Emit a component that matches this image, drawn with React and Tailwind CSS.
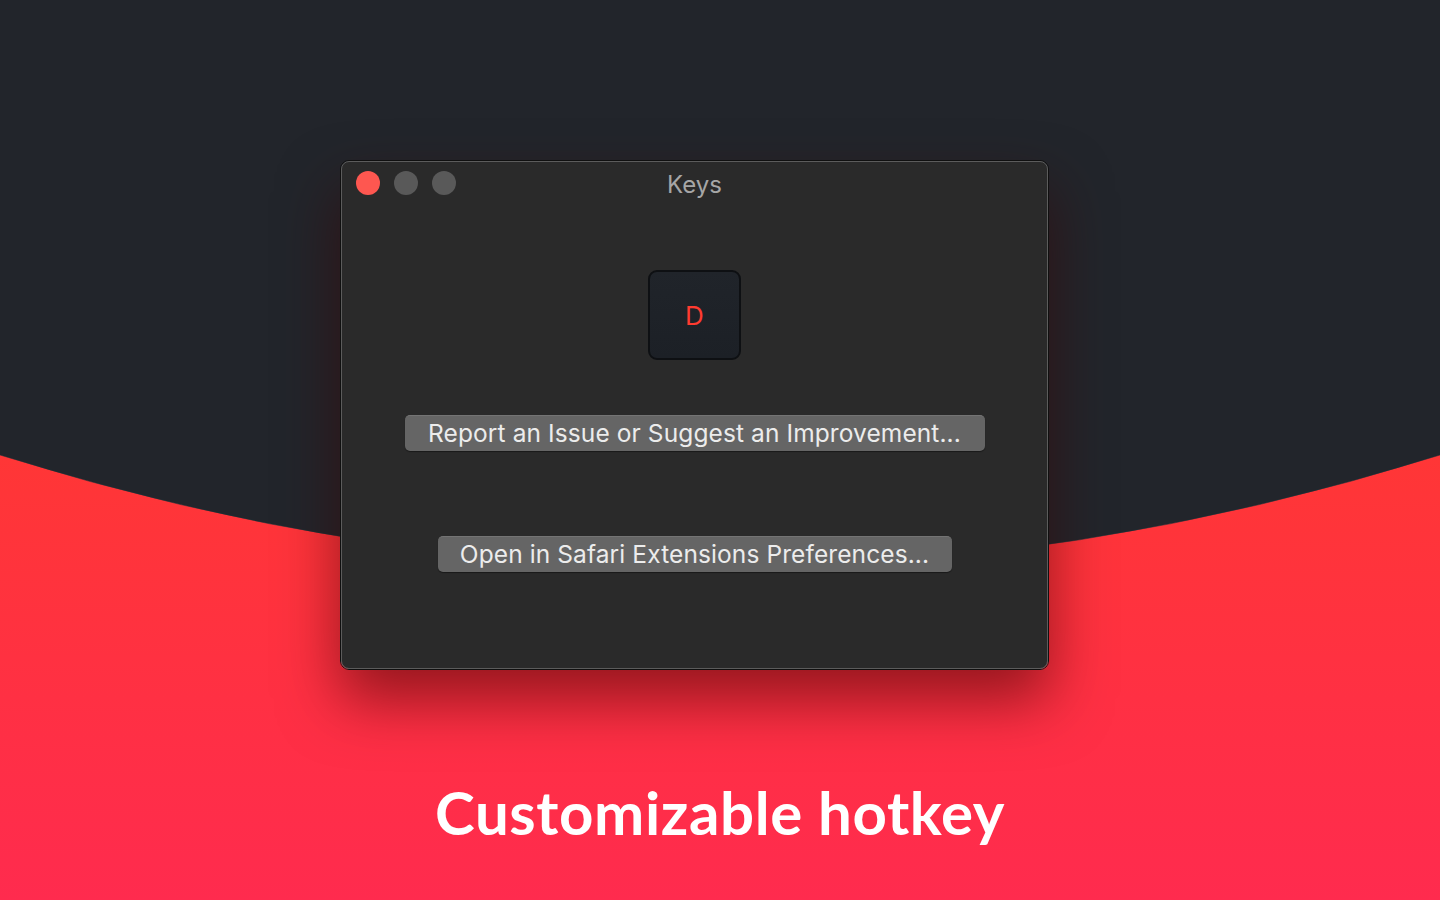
import React from 'react';

// Curved red backdrop behind the window
function Backdrop() {
  return (
    <svg className="absolute inset-0" width="1440" height="900" viewBox="0 0 1440 900">
      <defs>
        <linearGradient id="red" x1="0" y1="0" x2="0" y2="1">
          <stop offset="0" stopColor="#ff3636" />
          <stop offset="1" stopColor="#ff2b4e" />
        </linearGradient>
      </defs>
      <rect width="1440" height="900" fill="#22252b" />
      <path d="M0 455 Q720 681 1440 455 L1440 900 L0 900 Z" fill="url(#red)" />
      <path d="M0 455 Q720 681 1440 455" fill="none" stroke="#16343a" strokeOpacity="0.5" strokeWidth="1" />
    </svg>
  );
}

function MacButton({ children, width }) {
  return (
    <button
      className={`h-[36px] ${width} rounded-[5px] bg-[#656565] border-t border-[#747474] text-[#ececec] text-[24.5px] leading-none tracking-[0.1px] shadow-[0_1px_1px_rgba(0,0,0,0.4)]`}
    >
      {children}
    </button>
  );
}

export default function App() {
  return (
    <div
      className="relative w-[1440px] h-[900px] overflow-hidden"
      style={{ fontFamily: 'Inter, "Open Sans", sans-serif' }}
    >
      <Backdrop />
      <div className="relative flex flex-col items-start">
        {/* Window */}
        <div className="mt-[160px] ml-[340px] w-[709px] h-[510px] rounded-[9px] border border-[#101010] shadow-[0_30px_60px_rgba(60,0,0,0.55)]">
          <div className="w-full h-full rounded-[8px] border border-[#5c5c5c] bg-[#2a2a2a] flex flex-col">
            {/* Title bar */}
            <div className="relative h-[42px] flex items-center pl-[14px] gap-[14px]">
              <span className="w-[24px] h-[24px] rounded-full bg-[#fe5750]" />
              <span className="w-[24px] h-[24px] rounded-full bg-[#595959]" />
              <span className="w-[24px] h-[24px] rounded-full bg-[#595959]" />
              <div className="absolute inset-x-0 top-[5px] text-center text-[24px] text-[#a6a6a6]">Keys</div>
            </div>

            {/* Hotkey */}
            <div className="flex justify-center mt-[66px]">
              <div className="w-[93px] h-[90px] rounded-[9px] border-2 border-[#0e1013] bg-gradient-to-b from-[#20242a] to-[#1c2026] flex items-center justify-center text-[26px] text-[#ff3b30]">
                D
              </div>
            </div>

            <div className="flex flex-col items-center mt-[55px]">
              <MacButton width="w-[580px]">Report an Issue or Suggest an Improvement...</MacButton>
              <div className="h-[85px]" />
              <MacButton width="w-[514px]">Open in Safari Extensions Preferences...</MacButton>
            </div>
          </div>
        </div>

        <h1
          className="self-center mt-[112px] text-[60px] text-white leading-none tracking-[0.6px]"
          style={{ fontFamily: 'Lato, "Open Sans", sans-serif', fontWeight: 700 }}
        >
          Customizable hotkey
        </h1>
      </div>
    </div>
  );
}
